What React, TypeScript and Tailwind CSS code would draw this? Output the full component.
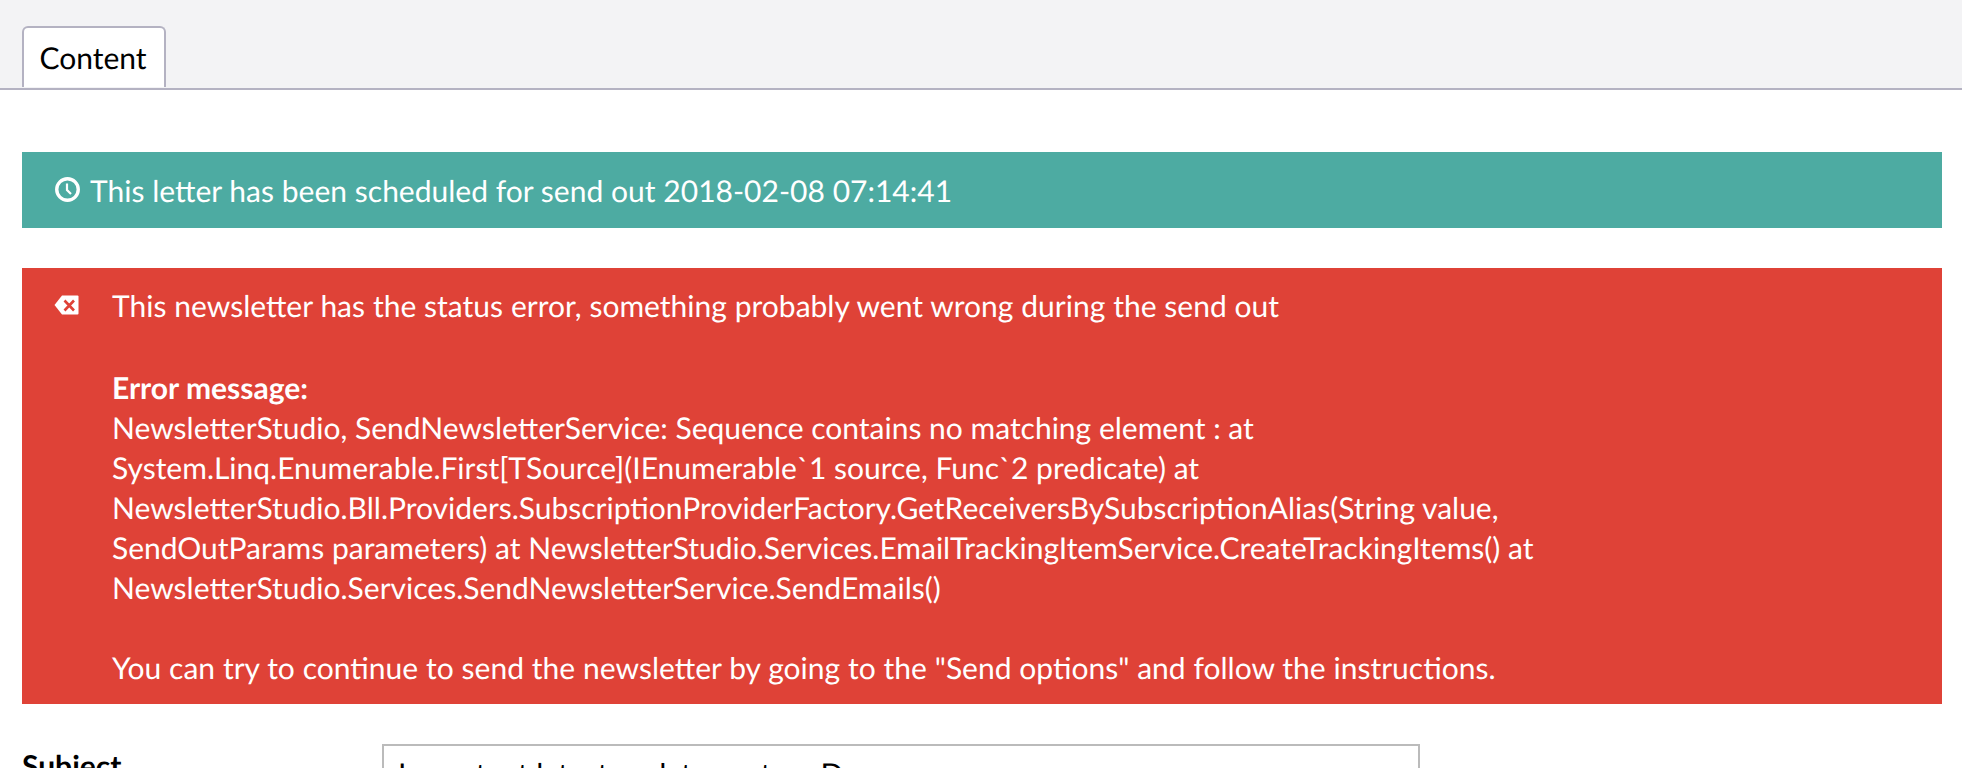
function ClockIcon() {
  return (
    <svg viewBox="0 0 25 25" className="-mt-[2px] h-[25px] w-[25px] shrink-0" fill="none" stroke="currentColor">
      <circle cx="12.5" cy="12.5" r="10.75" strokeWidth="3.4" />
      <path d="M12 6.5v6.5l4 4" strokeWidth="2.2" />
    </svg>
  )
}

function BackspaceIcon() {
  return (
    <svg viewBox="0 0 25 20" className="h-[20px] w-[25px]">
      <path d="M8 0.5h15.5a1 1 0 0 1 1 1v17a1 1 0 0 1-1 1H8L0.5 10z" fill="#fff" />
      <path d="M10.5 5.5l9.5 10M20 5.5l-9.5 10" stroke="#df4237" strokeWidth="2.6" fill="none" />
    </svg>
  )
}

export default function App() {
  return (
    <div className="h-[768px] overflow-hidden bg-white font-['Lato',sans-serif] text-[30px] leading-[40px] text-black [text-rendering:geometricPrecision]">
      <div className="flex h-[90px] items-end border-b-2 border-[#b4b2c2] bg-[#f3f3f5] pb-[1px] pl-[22px]">
        <div className="flex h-[61px] w-[144px] items-center justify-center rounded-t-md border-2 border-b-0 border-[#b4b2c2] bg-white pr-[2px]">
          Content
        </div>
      </div>

      <div className="mt-[62px] pr-5 pl-[22px]">
        <div className="flex h-[76px] items-center gap-[10px] bg-[#4daba2] pl-[33px] text-white">
          <ClockIcon />
          <span className="pt-[2px] [word-spacing:0.12px]">This letter has been scheduled for send out 2018-02-08 07:14:41</span>
        </div>

        <div className="relative mt-[40px] h-[436px] bg-[#df4237] pt-[18px] pl-[90px] text-white">
          <div className="absolute top-[27px] left-[32px]">
            <BackspaceIcon />
          </div>
          <p className="[word-spacing:0.2px]">This newsletter has the status error, something probably went wrong during the send out</p>
          <p className="mt-[42px] font-bold">Error message:</p>
          <p className="w-[1500px]">
            NewsletterStudio, SendNewsletterService: Sequence contains no matching element : at
            <br />
            System.Linq.Enumerable.First[TSource](IEnumerable`1 source, Func`2 predicate) at
            <br />
            NewsletterStudio.Bll.Providers.SubscriptionProviderFactory.GetReceiversBySubscriptionAlias(String value,
            <br />
            SendOutParams parameters) at NewsletterStudio.Services.EmailTrackingItemService.CreateTrackingItems() at
            <br />
            NewsletterStudio.Services.SendNewsletterService.SendEmails()
          </p>
          <p className="mt-[40px] [word-spacing:0.2px]">
            You can try to continue to send the newsletter by going to the "Send options" and follow the instructions.
          </p>
        </div>

        <div className="mt-[40px] flex">
          <label className="w-[360px] pt-[2px] font-bold">Subject</label>
          <div className="h-[60px] w-[1038px] border-2 border-[#bbbbbb] px-[14px] pt-[8px]">
            Important latest update sent on Dora
          </div>
        </div>
      </div>
    </div>
  )
}
